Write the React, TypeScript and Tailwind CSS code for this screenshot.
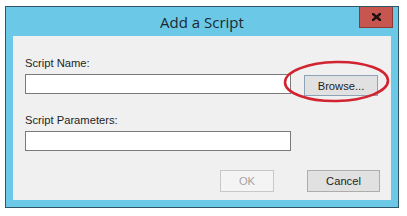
import React from "react";

export default function App() {
    const label = "font-['Liberation_Sans',Arial,sans-serif] text-[11.2px] leading-[14px] text-[#1e1e1e]";
    return (
        <div className="w-[407px] h-[216px] bg-white pl-[5px] pt-[6px]">
            {/* Window */}
            <div className="w-[394px] border border-[#2f5566] bg-[#6bc8e6] flex flex-col">
                {/* Title bar */}
                <div className="relative h-[29px] flex items-center justify-center">
                    <span className="font-['Open_Sans',sans-serif] text-[15px] text-[#1a2a33] leading-none pt-[1px]">
                        Add a Script
                    </span>
                    <button className="absolute right-[5px] top-0 w-[34px] h-[21px] bg-[#c75550] border border-[#8a3a36] border-t-0 flex items-center justify-center">
                        <svg width="9" height="8" viewBox="0 0 9 8">
                            <path d="M1 1L8 7M8 1L1 7" stroke="#1c1010" strokeWidth="2.4" strokeLinecap="square" />
                        </svg>
                    </button>
                </div>

                {/* Content */}
                <div className="mx-[7px] mb-[7px] h-[164px] bg-[#f0f0f0] flex flex-col pl-[12px] pr-[11px] pt-[20px]">
                    <span className={label}>Script Name:</span>
                    <div className="flex items-center mt-[4px] h-[20px]">
                        <input className="w-[266px] h-[20px] bg-white border border-[#7a7a7a] outline-none" />
                        <div className="relative ml-[13px]">
                            <button className={`w-[74px] h-[21px] bg-[#e1e1e1] border border-[#8fa3b8] ${label}`}>
                                Browse...
                            </button>
                            <svg className="absolute left-[-21px] top-[-12px]" width="108" height="44" viewBox="0 0 108 44">
                                <ellipse cx="53.5" cy="21.5" rx="51.5" ry="19.5" fill="none" stroke="#d22430" strokeWidth="2.6" transform="rotate(-1 53.5 21.5)" />
                            </svg>
                        </div>
                    </div>

                    <span className={`${label} mt-[19px]`}>Script Parameters:</span>
                    <input className="mt-[4px] w-[266px] h-[20px] bg-white border border-[#7a7a7a] outline-none" />

                    <div className="flex justify-end gap-[33px] mt-[19px]">
                        <button className={`w-[54px] h-[22px] bg-[#f4f4f4] border border-[#c8c8c8] ${label} text-[#a3a3a3]`}>
                            OK
                        </button>
                        <button className={`w-[73px] h-[22px] bg-[#e1e1e1] border border-[#adadad] ${label}`}>
                            Cancel
                        </button>
                    </div>
                </div>
            </div>
        </div>
    );
}
